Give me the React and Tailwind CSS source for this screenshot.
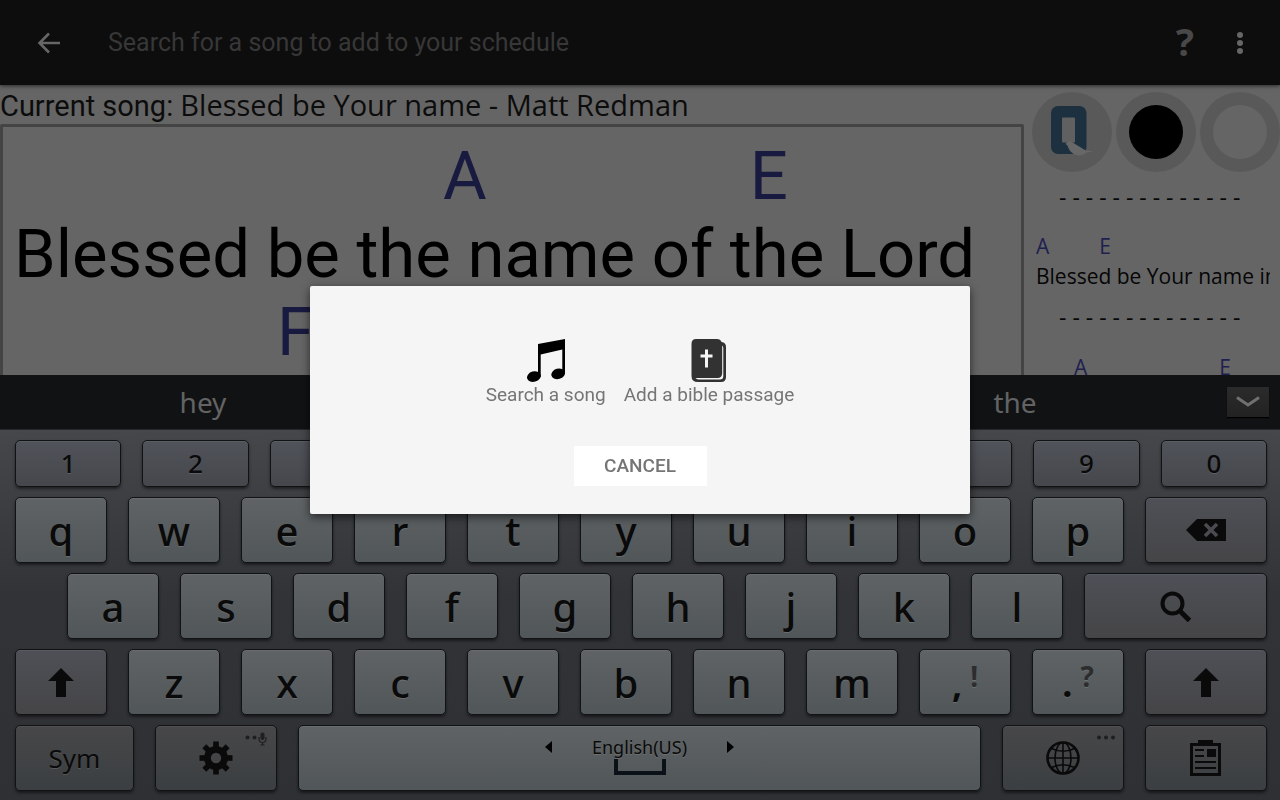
const TOP_ROW = ['1', '2', '3', '4', '5', '6', '7', '8', '9', '0'];
const Q_ROW = ['q', 'w', 'e', 'r', 't', 'y', 'u', 'i', 'o', 'p'];
const A_ROW = ['a', 's', 'd', 'f', 'g', 'h', 'j', 'k', 'l'];
const Z_ROW = ['z', 'x', 'c', 'v', 'b', 'n', 'm'];

const KEY_BASE =
  'relative flex min-w-0 items-center justify-center rounded-[5px] border border-[#111214] text-[#0a0a0a] shadow-[0_2px_3px_rgba(0,0,0,0.5),inset_0_1px_0_rgba(255,255,255,0.06)] [text-shadow:0_1px_0_rgba(255,255,255,0.12)]';

const KEY_TONES = {
  light: 'bg-linear-to-b from-[#5f6365] to-[#515658]',
  number: 'bg-linear-to-b from-[#505359] to-[#45474c]',
  action: 'bg-linear-to-b from-[#4d5056] to-[#454547]',
  bottom: 'bg-linear-to-b from-[#474749] to-[#3b3f41]',
};

const Key = ({ tone = 'light', className = '', children, ...rest }) => (
  <button type="button" className={`${KEY_BASE} ${KEY_TONES[tone]} ${className}`} {...rest}>
    {children}
  </button>
);

const LetterKey = ({ letter }) => (
  <Key className="flex-[90] pt-0.5 text-[40px] leading-10 font-medium">{letter}</Key>
);

const ShiftIcon = () => (
  <svg width="26" height="30" viewBox="0 0 26 30" fill="#0a0a0a" aria-hidden="true">
    <path d="M13 1 26 14H18V30H8V14H0Z" />
  </svg>
);

const BackspaceIcon = () => (
  <svg width="40" height="22" viewBox="0 0 40 22" aria-hidden="true">
    <path d="M0 11 11 0H40V22H11Z" fill="#0a0a0a" />
    <path d="M19 5 31 17M31 5 19 17" stroke="#4a4b50" strokeWidth="3.6" />
  </svg>
);

const SearchIcon = () => (
  <svg width="32" height="32" viewBox="0 0 32 32" fill="none" stroke="#0a0a0a" aria-hidden="true">
    <circle cx="12.500" cy="13.500" r="10" strokeWidth="4" />
    <path d="M19 20 29.500 30.500" strokeWidth="5" />
  </svg>
);

const GearIcon = () => (
  <svg width="34" height="34" viewBox="-17 -17 34 34" aria-hidden="true">
    <g fill="#0a0a0a">
      {[0, 45, 90, 135].map((angle) => (
        <rect key={angle} x="-2.800" y="-16.500" width="5.600" height="33" transform={`rotate(${angle})`} />
      ))}
      <circle r="12" />
    </g>
    <circle r="5.200" fill="#434446" />
  </svg>
);

const MicIcon = () => (
  <svg width="22" height="14" viewBox="0 0 22 14" fill="#1e1f20" aria-hidden="true">
    <circle cx="2.500" cy="5.500" r="2" />
    <circle cx="9.500" cy="5.500" r="2" />
    <rect x="15.500" y="0.500" width="4" height="7.500" rx="2" />
    <path d="M14 5V7a3.500 3.500 0 0 0 7 0V5M17.500 10.500V13M15.500 13H19.500" fill="none" stroke="#1e1f20" strokeWidth="1.200" />
  </svg>
);

const GlobeIcon = () => (
  <svg width="34" height="34" viewBox="0 0 34 34" fill="none" stroke="#0a0a0a" strokeWidth="1.600" aria-hidden="true">
    <circle cx="17" cy="17" r="15.500" strokeWidth="2.600" />
    <ellipse cx="17" cy="17" rx="8" ry="15.500" />
    <path d="M17 1.500V32.500M1.500 17H32.500M5.500 7.500Q17 13 28.500 7.500M5.500 26.500Q17 21 28.500 26.500" />
  </svg>
);

const ClipboardIcon = () => (
  <svg width="32" height="36" viewBox="0 0 32 36" aria-hidden="true">
    <path d="M0 3H8V0H23V3H31V36H0ZM3 6V33H28V6Z" fill="#0a0a0a" fillRule="evenodd" />
    <path d="M17 9H26V17H17Z" fill="#0a0a0a" />
    <path d="M5 10H14M5 16H14M5 22H26M5 28H26" stroke="#0a0a0a" strokeWidth="2" />
  </svg>
);

const MusicIcon = () => (
  <svg width="38" height="44" viewBox="0 0 38 44" aria-hidden="true">
    <path d="M11 5 38 0V35H35.300V10.500L13.700 15.500V38H11Z" />
    <ellipse cx="6.900" cy="37.600" rx="7" ry="5.200" transform="rotate(-16 6.900 37.600)" />
    <ellipse cx="31.200" cy="34.800" rx="7" ry="5.200" transform="rotate(-16 31.200 34.800)" />
  </svg>
);

const BibleIcon = () => (
  <svg width="36" height="44" viewBox="0 0 36 44" aria-hidden="true">
    <path d="M5 0H26Q29.500 0 30.500 3Q35 3.500 35 8V38Q35 43 30 43H7Q0.500 43 0.500 37V5Q0.500 0 5 0Z" fill="#323232" />
    <path d="M31.200 6.500V34Q31.200 39 26.500 39H4.500Q6 40.500 8 40.500H29Q32.300 40.500 32.300 37V9Q32.300 7 31.200 6.500Z" fill="#f5f5f5" />
    <path d="M14 10.500H17V15.500H21.500V18.500H17V28.500H14V18.500H9.500V15.500H14Z" fill="#f5f5f5" />
  </svg>
);

const LogoIcon = () => (
  <svg width="44" height="52" viewBox="0 0 44 52" aria-hidden="true">
    <rect x="1" y="0" width="35.500" height="48" rx="7" fill="#1c303f" />
    <rect x="12" y="11.500" width="13" height="25" rx="1" fill="#606060" />
    <path d="M15.500 38C18 34.500 22 35 25 38C29 40 33 43 36 44.500L43 45.500L36 46.800C33 50 27 50 24 48C20 46 18.500 42.500 17.500 39.500Z" fill="#686868" />
  </svg>
);

const Header = () => (
  <header className="z-10 flex h-[85px] shrink-0 items-center bg-[#0d0d0d] pr-[30px] pl-[37px] shadow-[0_1px_4px_rgba(0,0,0,0.6)]">
    <button type="button" aria-label="Back" className="mr-[46px] flex w-[25px]">
      <svg width="24" height="22" viewBox="0 0 24 22" fill="none" stroke="#666" strokeWidth="2.600" aria-hidden="true">
        <path d="M23 11H3M12 1.500 2.500 11 12 20.500" />
      </svg>
    </button>
    <input
      type="text"
      aria-label="Search for a song"
      placeholder="Search for a song to add to your schedule"
      className="min-w-0 flex-1 bg-transparent text-[25px] text-[#666] outline-none placeholder:text-[#373737]"
    />
    <button type="button" aria-label="Help" className="mr-9 pb-1 font-['Noto_Sans',sans-serif] text-[38px] leading-10 font-bold text-[#484848]">
      ?
    </button>
    <button type="button" aria-label="More options" className="flex w-5 justify-center">
      <svg width="6" height="22" viewBox="0 0 6 22" fill="#666" aria-hidden="true">
        <circle cx="3" cy="3" r="3" />
        <circle cx="3" cy="11" r="3" />
        <circle cx="3" cy="19" r="3" />
      </svg>
    </button>
  </header>
);

const SongPanel = () => (
  <section className="flex min-w-0 flex-1 flex-col">
    <h1 className="h-[39px] text-[29px] leading-10 whitespace-nowrap text-[#0c0c0c]">
      Current song: <span className="font-['Open_Sans',sans-serif]">Blessed be Your name - Matt Redman</span>
    </h1>
    <div className="flex-1 overflow-hidden rounded-t-[3px] border-[3px] border-b-0 border-[#444] pt-[10px] pl-[11px] text-[67px] leading-[78px] whitespace-nowrap">
      <p className="flex gap-[263px] pl-[429px] text-[#191a40]">
        <span>A</span>
        <span>E</span>
      </p>
      <p className="text-black">Blessed be the name of the Lord</p>
      <p className="pl-[263px] text-[#191a40]">F#m</p>
    </div>
  </section>
);

const Sidebar = () => (
  <aside className="w-64 shrink-0 pt-[7px] pl-2 font-['Open_Sans',sans-serif] text-[21px] leading-[30px]">
    <div className="flex gap-1">
      <button type="button" aria-label="Show logo" className="flex h-20 w-20 shrink-0 items-center justify-center rounded-full bg-[#595959]">
        <LogoIcon />
      </button>
      <button type="button" aria-label="Black screen" className="flex h-20 w-20 shrink-0 items-center justify-center rounded-full bg-[#595959]">
        <span className="h-[54px] w-[54px] rounded-full bg-black" />
      </button>
      <button type="button" aria-label="White screen" className="flex h-20 w-20 shrink-0 items-center justify-center rounded-full bg-[#595959]">
        <span className="h-[54px] w-[54px] rounded-full bg-[#656565]" />
      </button>
    </div>
    <div className="mr-[10px] ml-1 overflow-hidden pt-[10px] whitespace-pre text-[#060606]">
      <p className="pl-[23px] text-[23px]">- - - - - - - - - - - - - -</p>
      <p className="mt-5 flex gap-[50px] leading-[29px] text-[#1f2050]">
        <span>A</span>
        <span>E</span>
      </p>
      <p>Blessed be Your name in</p>
      <p className="mt-[11px] pl-[23px] text-[23px]">- - - - - - - - - - - - - -</p>
      <p className="mt-5 flex gap-[132px] pl-[38px] text-[#1f2050]">
        <span>A</span>
        <span>E</span>
      </p>
    </div>
  </aside>
);

const Suggestions = () => (
  <div className="flex h-[55px] items-center justify-between border-b border-[#26282b] bg-[#111214] text-[28px] text-[#636363]">
    <button type="button" className="w-[406px]">hey</button>
    <div className="flex items-center">
      <button type="button" className="w-[406px]">the</button>
      <button type="button" aria-label="More suggestions" className="mr-[11px] ml-[9px] flex h-[30px] w-[42px] items-center justify-center bg-linear-to-b from-[#2b2b2b] to-[#222] shadow-[0_1px_1px_#000]">
        <svg width="24" height="12" viewBox="0 0 24 12" fill="none" stroke="#707070" strokeWidth="3" aria-hidden="true">
          <path d="M1 1.500 12 9 23 1.500" />
        </svg>
      </button>
    </div>
  </div>
);

const Keyboard = () => (
  <div className="shrink-0 font-['Noto_Sans',sans-serif]">
    <Suggestions />
    <div className="flex flex-col gap-[10px] bg-linear-to-b from-[#46474b] via-[#323337] via-45% to-[#2f3034] pt-[10px] pr-[13px] pb-[9px] pl-[15px]">
      <div className="flex h-[47px] gap-[21px]">
        {TOP_ROW.map((digit) => (
          <Key key={digit} tone="number" className="flex-1 text-[26px] font-medium">{digit}</Key>
        ))}
      </div>
      <div className="flex h-[66px] gap-[21px]">
        {Q_ROW.map((letter) => <LetterKey key={letter} letter={letter} />)}
        <Key tone="action" className="flex-[120]" aria-label="Backspace"><BackspaceIcon /></Key>
      </div>
      <div className="flex h-[66px] gap-[21px] pl-[52px]">
        {A_ROW.map((letter) => <LetterKey key={letter} letter={letter} />)}
        <Key tone="action" className="flex-[181]" aria-label="Search"><SearchIcon /></Key>
      </div>
      <div className="flex h-[66px] gap-[21px]">
        <Key tone="action" className="flex-[90]" aria-label="Shift"><ShiftIcon /></Key>
        {Z_ROW.map((letter) => <LetterKey key={letter} letter={letter} />)}
        <Key className="flex-[90] gap-2 pt-1 font-bold">
          <span className="text-[36px] leading-10">,</span>
          <span className="pb-4 text-[28px] leading-8 text-[#2c2d2e]">!</span>
        </Key>
        <Key className="flex-[90] gap-2 pt-1 font-bold">
          <span className="text-[36px] leading-10">.</span>
          <span className="pb-4 text-[28px] leading-8 text-[#2c2d2e]">?</span>
        </Key>
        <Key tone="action" className="flex-[120]" aria-label="Shift"><ShiftIcon /></Key>
      </div>
      <div className="flex h-[66px] gap-[21px]">
        <Key tone="bottom" className="flex-[117] text-[26px]">Sym</Key>
        <Key tone="bottom" className="flex-[120]" aria-label="Settings">
          <GearIcon />
          <span className="absolute top-[6px] right-[9px]"><MicIcon /></span>
        </Key>
        <Key className="flex-[681] flex-col pb-1.5">
          <span className="flex items-center gap-10 text-lg leading-6">
            <svg width="7" height="12" viewBox="0 0 7 12" aria-hidden="true"><path d="M7 0V12L0 6Z" /></svg>
            English(US)
            <svg width="7" height="12" viewBox="0 0 7 12" aria-hidden="true"><path d="M0 0V12L7 6Z" /></svg>
          </span>
          <span className="h-4 w-[52px] border-4 border-t-0 border-[#0a1118]" />
        </Key>
        <Key tone="bottom" className="flex-[120]" aria-label="Language">
          <GlobeIcon />
          <svg className="absolute top-[9px] right-[7px]" width="20" height="5" viewBox="0 0 20 5" fill="#1e1f20" aria-hidden="true">
            <circle cx="3" cy="2.500" r="2" />
            <circle cx="10" cy="2.500" r="2" />
            <circle cx="17" cy="2.500" r="2" />
          </svg>
        </Key>
        <Key tone="bottom" className="flex-[120]" aria-label="Clipboard"><ClipboardIcon /></Key>
      </div>
    </div>
  </div>
);

const AddDialog = () => (
  <div className="fixed inset-0 z-20 flex items-center justify-center">
    <div
      role="dialog"
      aria-label="Add to schedule"
      className="flex w-[660px] max-w-full flex-col items-center rounded-[2px] bg-[#f5f5f5] pt-[53px] pb-7 text-[#757575] shadow-[0_3px_10px_rgba(0,0,0,0.6)]"
    >
      <div className="flex gap-[18px] text-[19px] leading-6">
        <button type="button" className="flex flex-col items-center">
          <MusicIcon />
          Search a song
        </button>
        <button type="button" className="flex flex-col items-center">
          <BibleIcon />
          Add a bible passage
        </button>
      </div>
      <button type="button" className="mt-[39px] h-10 w-[133px] bg-white text-[19px] font-medium">
        CANCEL
      </button>
    </div>
  </div>
);

const App = () => {
  return (
    <div className="flex h-screen flex-col overflow-hidden bg-[#656565] font-['Roboto',sans-serif]">
      <Header />
      <main className="flex min-h-0 flex-1 overflow-hidden">
        <SongPanel />
        <Sidebar />
      </main>
      <Keyboard />
      <AddDialog />
    </div>
  );
};

export default App;
